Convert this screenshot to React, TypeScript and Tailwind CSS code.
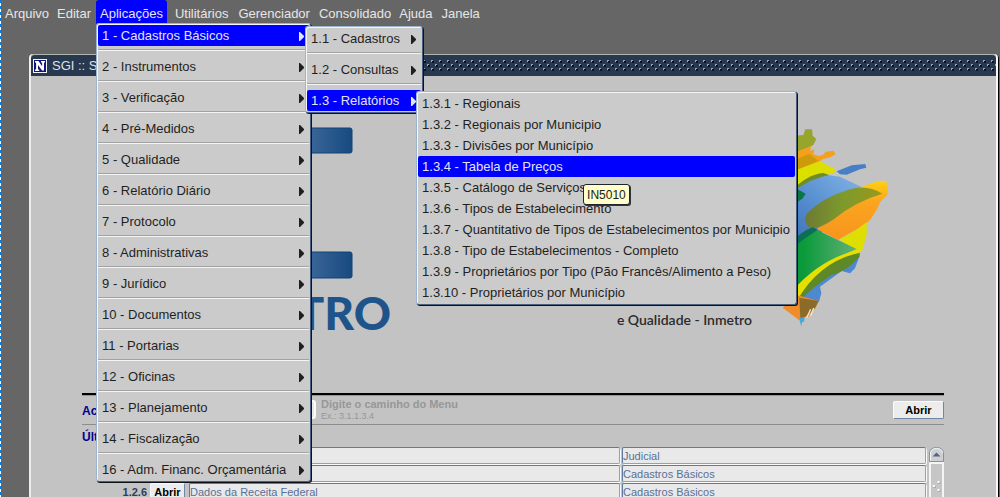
import React from "react";

const mainItems = [
  "1 - Cadastros Básicos",
  "2 - Instrumentos",
  "3 - Verificação",
  "4 - Pré-Medidos",
  "5 - Qualidade",
  "6 - Relatório Diário",
  "7 - Protocolo",
  "8 - Administrativas",
  "9 - Jurídico",
  "10 - Documentos",
  "11 - Portarias",
  "12 - Oficinas",
  "13 - Planejamento",
  "14 - Fiscalização",
  "16 - Adm. Financ. Orçamentária",
];

const subItems = ["1.1 - Cadastros", "1.2 - Consultas", "1.3 - Relatórios"];

const reportItems = [
  "1.3.1 - Regionais",
  "1.3.2 - Regionais por Municipio",
  "1.3.3 - Divisões por Município",
  "1.3.4 - Tabela de Preços",
  "1.3.5 - Catálogo de Serviços",
  "1.3.6 - Tipos de Estabelecimento",
  "1.3.7 - Quantitativo de Tipos de Estabelecimentos por Municipio",
  "1.3.8 - Tipo de Estabelecimentos - Completo",
  "1.3.9 - Proprietários por Tipo (Pão Francês/Alimento a Peso)",
  "1.3.10 - Proprietários por Município",
];

const recent = [
  { code: "", name: "", group: "Judicial" },
  { code: "", name: "", group: "Cadastros Básicos" },
  { code: "1.2.6", name: "Dados da Receita Federal", group: "Cadastros Básicos" },
];

const panel =
  "absolute rounded-[3px] border border-t-[#9db4d0] border-l-[#9db4d0] border-r-[#4a5f7d] border-b-[#4a5f7d] bg-[#cbcbcb] p-px shadow-[inset_1px_1px_0_#f4f6f8,1px_1px_0_#0c121c]";

function Arrow() {
  return (
    <svg className="ml-auto h-[9px] w-[5px] shrink-0" viewBox="0 0 5 9" fill="currentColor" aria-hidden="true">
      <path d="M0 0 H1 L5 4 V5 L1 9 H0 Z" />
    </svg>
  );
}

function MenuRow({ label, active, arrow }: { label: string; active?: boolean; arrow?: boolean }) {
  return (
    <button
      type="button"
      role="menuitem"
      className={
        "flex h-[21px] w-full items-center whitespace-nowrap rounded-[2px] pt-px pr-[5px] pl-[4px] text-left " +
        (active ? "bg-[#0000fe] text-[#e4e4f4]" : "text-[#1f1f1f]")
      }
    >
      {label}
      {arrow && <Arrow />}
    </button>
  );
}

function Separator() {
  return (
    <div className="flex h-[10px] flex-col pt-[3px]">
      <div className="h-px bg-[#a2a2a2]" />
      <div className="h-px bg-[#f4f4f4]" />
    </div>
  );
}

function ReportsMenu() {
  return (
    <ul role="menu" className={panel + " top-[1px] left-[109px] z-30 w-[381px]"}>
      {reportItems.map((label, i) => (
        <li key={label} className="relative">
          <MenuRow label={label} active={i === 3} />
          {i === 3 && (
            <span
              role="tooltip"
              className="absolute top-[28px] left-[165px] z-40 flex h-[21px] items-center rounded-[3px] border border-[#20242c] bg-[#ffffcb] px-[3px] text-[12px] text-[#222] shadow-[1px_1px_0_#30363f]"
            >
              IN5010
            </span>
          )}
        </li>
      ))}
    </ul>
  );
}

function SubMenu() {
  return (
    <ul role="menu" className={panel + " top-[1px] left-[207px] z-20 w-[118px]"}>
      {subItems.map((label, i) => (
        <li key={label}>
          <div className="relative">
            <MenuRow label={label} active={i === 2} arrow />
            {i === 2 && <ReportsMenu />}
          </div>
          {i < 2 && <Separator />}
        </li>
      ))}
    </ul>
  );
}

function MainMenu() {
  return (
    <ul role="menu" className={panel + " top-[23px] left-0 z-10 w-[215px]"}>
      {mainItems.map((label, i) => (
        <li key={label}>
          <div className="relative">
            <MenuRow label={label} active={i === 0} arrow />
            {i === 0 && <SubMenu />}
          </div>
          {i < mainItems.length - 1 && <Separator />}
        </li>
      ))}
    </ul>
  );
}

function MenuBar() {
  const near = "h-[26px] px-[4px] pt-[2px] text-[#e6e6e6]";
  const item = "h-[26px] px-[5px] pt-[2px] text-[#e6e6e6]";
  return (
    <nav className="flex h-[26px] items-start">
      <button type="button" className={near}>Arquivo</button>
      <button type="button" className={near}>Editar</button>
      <div className="relative mr-[3px] ml-px">
        <button type="button" className="h-[26px] rounded-[3px] bg-[#0000fe] px-[4px] pt-[2px] text-[#e4e4f4]">
          Aplicações
        </button>
        <MainMenu />
      </div>
      <button type="button" className={item}>Utilitários</button>
      <button type="button" className={item}>Gerenciador</button>
      <button type="button" className={near}>Consolidado</button>
      <button type="button" className={near}>Ajuda</button>
      <button type="button" className={item}>Janela</button>
    </nav>
  );
}

function TitleBar() {
  return (
    <header className="flex h-[22px] shrink-0 items-center rounded-t-[4px] border-t border-[#aeb6ae] bg-[#28384f] pl-[2px] text-[#dfe3e8]">
      <svg className="h-[14px] w-[14px] shrink-0" viewBox="0 0 14 14" aria-hidden="true">
        <rect width="14" height="14" fill="#f2f4fa" />
        <path d="M1 1h12v12H1z" fill="#12127c" />
        <path d="M2 2h3.5l3.6 5.2V3.4H8V2h4v1.4h-1v8.2H9L5 6v4.6h1.2V12H2v-1.4h1.1V3.4H2z" fill="#fff" />
      </svg>
      <h1 className="ml-[5px] whitespace-nowrap">SGI :: S</h1>
      <svg className="ml-[10px] h-[12px] min-w-0 flex-1" aria-hidden="true">
        <defs>
          <pattern id="grip" width="8" height="12" patternUnits="userSpaceOnUse" x="3">
            <g fill="#0b121d">
              <rect x="1" y="1" width="2" height="2" />
              <rect x="5" y="5" width="2" height="2" />
              <rect x="1" y="9" width="2" height="2" />
            </g>
            <g fill="#8fa3bb">
              <path d="M0 0h2v1H1v1H0zM4 4h2v1H5v1H4zM0 8h2v1H1v1H0z" />
            </g>
          </pattern>
        </defs>
        <rect width="100%" height="12" fill="url(#grip)" />
      </svg>
    </header>
  );
}

function InmetroLogo() {
  return (
    <svg className="h-[317px] w-[250px] shrink-0" viewBox="0 0 250 317" role="img" aria-label="Inmetro">
      <defs>
        <linearGradient id="bar" x1="0" x2="1">
          <stop offset="0.6" stopColor="#5277a8" />
          <stop offset="1" stopColor="#174a80" />
        </linearGradient>
      </defs>
      <rect x="40" y="52" width="172" height="25" rx="2" fill="url(#bar)" stroke="#0f4478" />
      <rect x="40" y="176" width="172" height="26" rx="2" fill="url(#bar)" stroke="#0f4478" />
      <text x="251" y="254" textAnchor="end" fill="#1f548b" className="font-['Lato',sans-serif] text-[46px] font-black">
        TRO
      </text>
    </svg>
  );
}

function BrazilMap() {
  return (
    <svg className="h-[220px] w-[130px] shrink-0" viewBox="0 0 390 660" aria-hidden="true">
      <defs>
        <linearGradient id="blue" x1="0" x2="1" y1="1" y2="0">
          <stop offset="0" stopColor="#3b6fb8" />
          <stop offset="0.5" stopColor="#5b92d2" />
          <stop offset="1" stopColor="#83b4e6" />
        </linearGradient>
        <linearGradient id="green" x1="0" x2="1">
          <stop offset="0.2" stopColor="#0a9a3a" />
          <stop offset="1" stopColor="#64b077" />
        </linearGradient>
        <linearGradient id="orange" x1="0" x2="0" y1="0" y2="1">
          <stop offset="0" stopColor="#ffd012" />
          <stop offset="0.35" stopColor="#fba51f" />
          <stop offset="1" stopColor="#f7941e" />
        </linearGradient>
        <linearGradient id="olive" x1="0" x2="1">
          <stop offset="0" stopColor="#6d7a35" />
          <stop offset="0.5" stopColor="#7e9a2c" />
          <stop offset="1" stopColor="#98991b" />
        </linearGradient>
      </defs>
      <path d="M60 64 L100 60 L106 43 L126 43 L128 62 L139 72 L130 90 L80 115 L60 120Z" fill="#98a52c" />
      <path d="M60 118 L124 93 L120 108 L133 103 L130 118 L145 123 L158 120 L168 110 L190 107 L197 117 L182 126 L158 133 L145 142 L60 175Z" fill="#f4a01d" />
      <path d="M60 140 L118 117 L145 137 L60 175Z" fill="#ce9a0a" />
      <path d="M60 172 L150 139 L200 165 L188 176 L160 180 L60 220Z" fill="#dce000" />
      <path d="M200 169 L245 151 L286 147 L289 158 L270 163 L230 179 L210 178Z" fill="#477fc7" />
      <path d="M60 225 L155 178 L210 185 L275 216 L230 330 L60 380Z" fill="url(#blue)" />
      <path d="M60 232 Q110 178 160 174 L177 180 Q120 192 75 226Z" fill="#6f8c26" />
      <path d="M60 210 L107 236 L98 250 L60 278Z" fill="#087744" />
      <path d="M270 218 Q325 194 346 198 Q356 207 352 240 L331 260 L320 285 L300 315 L275 337 L240 354 L205 375 L140 342 Q240 260 270 218Z" fill="url(#orange)" />
      <path d="M110 296 Q155 248 235 224 Q290 207 337 236 Q255 260 192 312 Q144 345 122 340 Q96 325 110 296Z" fill="url(#olive)" />
      <path d="M208 373 Q255 350 290 321 L290 360 L275 410 L250 410Z" fill="#dedf00" />
      <path d="M60 390 Q90 355 137 343 L260 402 Q160 445 80 520 L60 500Z" fill="url(#green)" />
      <path d="M60 390 Q90 350 128 337 L143 344 Q100 370 60 405Z" fill="#0b6e55" />
      <path d="M200 465 L270 420 L255 460 L240 475 L215 468 L150 515 L154 535 L147 560 L85 545Z" fill="#4d88d0" />
      <path d="M70 525 Q150 432 270 402 L269 416 Q168 445 87 550Z" fill="#e5e000" />
      <path d="M82 555 Q150 438 270 413 L268 425 Q235 466 185 480 Q125 518 92 556Z" fill="#5e8926" />
      <path d="M38 578 L80 540 L146 558 L138 577 L126 589 L116 605 L106 604 L88 616Z" fill="#f18c2b" />
      <path d="M88 548 L146 558 L134 581 L105 606 L91 611Z" fill="#8c6b28" />
      <path d="M88 608 L104 607 L102 620 L96 621 L94 634 L90 622Z" fill="#46aad8" />
      <path d="M110 608 L122 583 M122 603 L131 579" stroke="#eee6d2" strokeWidth="4" />
    </svg>
  );
}

function Field({ label, value }: { label: string; value: string }) {
  return (
    <input
      readOnly
      aria-label={label}
      value={value}
      className="h-[17px] w-full min-w-0 rounded-[2px] border border-t-[#5f7a9e] border-r-[#8ea2bb] border-b-[#8ea2bb] border-l-[#5f7a9e] bg-[#e9e9e9] pt-px text-[11px] text-[#5a7098] shadow-[1px_1px_0_#fafafa] outline-none"
    />
  );
}

const raised =
  "rounded-[2px] border border-t-[#fafafa] border-l-[#fafafa] border-r-[#6f86a6] border-b-[#6f86a6] bg-[#ececec] text-[11px] font-bold text-black";

function ScrollBar() {
  return (
    <div className="flex w-[15px] shrink-0 flex-col self-stretch" aria-hidden="true">
      <svg className="h-[15px] w-[15px]" viewBox="0 0 15 15">
        <path d="M0.5 14.5V6Q1 0.5 7.5 0.5Q14 0.5 14.5 6V14.5Z" fill="#cfcfcf" stroke="#7e93b0" />
        <path d="M1.5 13.5V6.5Q2 1.5 7.5 1.5Q13 1.5 13.5 6" fill="none" stroke="#f5f5f5" />
        <path d="M7.5 5.5L11.5 9.5H3.5Z" fill="#4e6788" />
      </svg>
      <div className="flex flex-1 justify-center border-2 border-b-0 border-[#f4f4f4] bg-[#c6c6c6] pt-[15px]">
        <svg className="h-[14px] w-[9px]" viewBox="0 0 9 14">
          <g fill="#9a9a9a">
            <circle cx="7" cy="3.6" r="1.5" />
            <circle cx="2.4" cy="7.6" r="1.5" />
            <circle cx="7" cy="11.6" r="1.5" />
          </g>
          <g fill="#fafafa">
            <circle cx="6.5" cy="3" r="1.3" />
            <circle cx="2" cy="7" r="1.3" />
            <circle cx="6.5" cy="11" r="1.3" />
          </g>
        </svg>
      </div>
    </div>
  );
}

export default function App() {
  return (
    <div className="flex h-screen flex-col overflow-hidden bg-[#666666] font-['Liberation_Sans',Arial,sans-serif] text-[13px] leading-[16px]">
      <div className="flex min-h-0 flex-1">
        <div className="w-px shrink-0 bg-[repeating-linear-gradient(to_bottom,#0a78d4_0px,#0a78d4_3px,#ffffff_3px,#ffffff_6px)]" />
        <div className="flex min-w-0 flex-1 flex-col">
          <MenuBar />
          <main className="mt-[28px] mr-[2px] ml-[28px] flex min-h-0 flex-1 flex-col rounded-t-[4px] border-r-2 border-l-2 border-r-[#f8f8f8] border-l-[#eeeeee] bg-[#c3c3c3] shadow-[1px_1px_0_#000]">
            <TitleBar />
            <div className="pr-[52px] pl-[51px]">
              <div className="flex h-[317px] items-start">
                <div className="ml-[58px]">
                  <InmetroLogo />
                </div>
                <p className="mt-[234px] ml-auto whitespace-nowrap font-['Lato',sans-serif] text-[14px] leading-[20px] font-semibold text-[#2b2b2b]">
                  e Qualidade - Inmetro
                </p>
                <div className="mt-[39px] mr-[44px] ml-[18px]">
                  <BrazilMap />
                </div>
              </div>
              <form className="flex h-[32px] items-center border-t-2 border-b border-t-black border-b-[#8c8c8c] shadow-[inset_0_1px_0_#969696]">
                <label htmlFor="path" className="w-[169px] pt-[2px] text-[12px] font-bold text-[#00008c]">
                  Ac
                </label>
                <input
                  id="path"
                  className="h-[19px] w-[65px] rounded-[3px] border-2 border-[#fafafa] bg-[#e9e9e9] outline-none"
                />
                <div className="ml-[5px] pt-px text-[#979797]">
                  <p className="text-[11px] leading-[13px] font-bold">Digite o caminho do Menu</p>
                  <p className="text-[9px] leading-[11px]">Ex.: 3.1.1.3.4</p>
                </div>
                <button type="button" className={raised + " ml-auto h-[18px] w-[51px]"}>
                  Abrir
                </button>
              </form>
              <h2 className="h-[22px] pt-[4px] text-[12px] font-bold text-[#00008c]">Últ</h2>
              <div className="flex gap-[3px]">
                <div className="flex min-w-0 flex-1 flex-col gap-px">
                  {recent.map((r, i) => (
                    <div key={i} className="flex h-[17px] items-center">
                      <span className="w-[65px] shrink-0 text-right text-[11px] font-bold text-[#2b3f5f]">
                        {r.code}
                      </span>
                      <div className="flex w-[42px] shrink-0 pl-[3px]">
                        {r.code && (
                          <button type="button" className={raised + " h-[17px] w-[35px]"}>
                            Abrir
                          </button>
                        )}
                      </div>
                      <div className="grid flex-1 grid-cols-[431fr_304fr] gap-[2px]">
                        <Field label="Aplicação" value={r.name} />
                        <Field label="Grupo" value={r.group} />
                      </div>
                    </div>
                  ))}
                </div>
                <ScrollBar />
              </div>
            </div>
          </main>
        </div>
      </div>
    </div>
  );
}
